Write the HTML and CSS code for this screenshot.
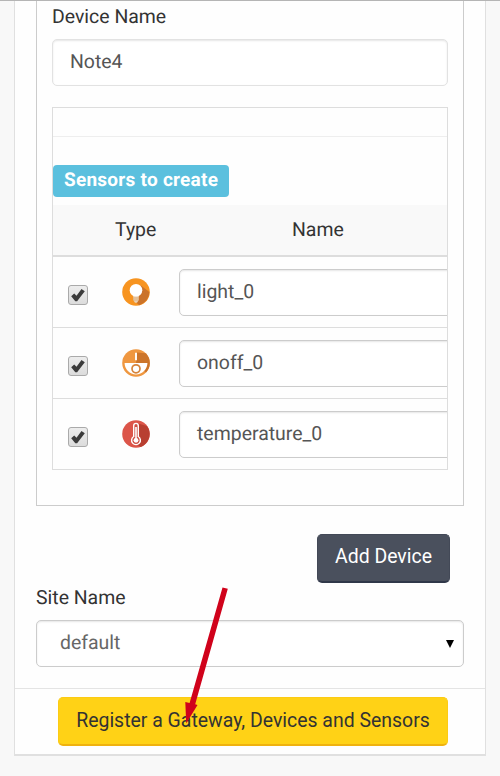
FILE: index.html
```html
<!DOCTYPE html>
<html lang="en">
<head>
<meta charset="utf-8">
<title>Register Gateway</title>
<link rel="stylesheet" href="styles.css">
</head>
<body>
<main class="card">
  <section class="card-body">
    <div class="device">
      <div class="label">Device Name</div>
      <div class="field device-field"><span>Note4</span></div>
      <div class="sensors">
        <div class="spacer"></div>
        <div class="caption"><span class="badge">Sensors to create</span></div>
        <div class="row head"><span></span><span class="type">Type</span><span class="name">Name</span></div>
        <div class="row">
          <span class="check"><svg viewBox="0 0 18 18"><path d="M2.2 10.3 5.2 7.6l2.3 2.2 5-6.9 3.3 2.3-7.7 10H6.3z"/></svg></span>
          <svg class="icon" viewBox="0 0 28 28"><circle cx="14" cy="14" r="13.8" fill="#f79420"/><path d="M18.5 7.2 27.4 14a13.8 13.8 0 0 1-10.2 13.2L11 21.5z" fill="#cb7329"/><path d="M11.2 18h5.6v4L15 24.8h-2L11.2 22z" fill="#ead0b2"/><path d="M11.2 20h5.6M11.3 22h5.4" stroke="#d99b5c" stroke-width=".6"/><circle cx="14" cy="12.2" r="6.3" fill="#fff"/></svg>
          <div class="field sensor-field"><span>light_0</span></div>
        </div>
        <div class="row">
          <span class="check"><svg viewBox="0 0 18 18"><path d="M2.2 10.3 5.2 7.6l2.3 2.2 5-6.9 3.3 2.3-7.7 10H6.3z"/></svg></span>
          <svg class="icon" viewBox="0 0 28 28"><circle cx="14" cy="14" r="13.8" fill="#ef9740"/><path d="M15 3.5 23.8 4.3A13.8 13.8 0 0 1 24 23.6L14 14z" fill="#cc752b"/><path d="M2.6 14h22.8a11.4 11.4 0 0 1-22.8 0z" fill="#fff"/><path d="M14 3.7v7.6" stroke="#fff" stroke-width="1.9"/><circle cx="14" cy="19.8" r="4" fill="#fff" stroke="#d6843b" stroke-width="1.7"/></svg>
          <div class="field sensor-field"><span>onoff_0</span></div>
        </div>
        <div class="row">
          <span class="check"><svg viewBox="0 0 18 18"><path d="M2.2 10.3 5.2 7.6l2.3 2.2 5-6.9 3.3 2.3-7.7 10H6.3z"/></svg></span>
          <svg class="icon" viewBox="0 0 28 28"><circle cx="14" cy="14" r="13.8" fill="#dc5549"/><path d="M16 3.5 25 6a13.8 13.8 0 0 1-6.4 21L14 24z" fill="#b83f31"/><path d="M11.7 16.5V5.7a2.3 2.3 0 0 1 4.6 0v10.8a4.4 4.4 0 1 1-4.6 0z" fill="#cf4e42" stroke="#fff" stroke-width="1.4"/><path d="M14 7v12" stroke="#fff" stroke-width="1.6"/><circle cx="14" cy="20.3" r="2.4" fill="#fff"/></svg>
          <div class="field sensor-field"><span>temperature_0</span></div>
        </div>
      </div>
    </div>
    <div class="actions"><button class="btn add">Add Device</button></div>
    <div class="label site-label">Site Name</div>
    <div class="field select"><span>default</span><svg class="caret" viewBox="0 0 8 8"><path d="M0 0h8L4 8z"/></svg></div>
  </section>
  <footer class="card-footer"><button class="btn register">Register a Gateway, Devices and Sensors</button></footer>
</main>
<svg class="arrow" viewBox="0 0 48 138"><path d="M41.5 1.5 46.8 2.8 14.2 118.2 16.5 119 5.2 137.5 4.3 116 8.6 117z" fill="#d0021b"/></svg>
</body>
</html>
```
FILE: styles.css
```css
* { box-sizing: border-box; }
body {
  margin: 0;
  height: 776px;
  overflow: hidden;
  position: relative;
  background: #f8f8f8;
  border-top: 1px solid #b5b5b5;
  font: 19.45px/24px Roboto, sans-serif;
  letter-spacing: 0;
  text-rendering: geometricPrecision;
  color: #333;
}
.card {
  margin: 0 14px;
  height: 755px;
  background: #fefefe;
  border: solid #e0e0e0;
  border-width: 0 1.5px 2px;
}
.card-body { height: 688px; padding: 0 21px; border-bottom: 1px solid #e4e4e4; }
.device { height: 505px; padding: 4px 15px 0; border: solid #ccc; border-width: 0 1px 1px; }
.label { height: 24px; }
.field {
  height: 47px;
  padding: 10px 17px;
  border: 1px solid #ccc;
  border-radius: 5px;
  background: #fff;
  box-shadow: inset 0 1px 2px rgba(0, 0, 0, 0.1);
  color: #555;
}
.device-field { margin-top: 10px; border-color: #e2e2e2; }
.sensors { margin-top: 21px; height: 363px; border: 1px solid #ddd; overflow: hidden; }
.spacer { height: 29px; border-bottom: 1px solid #eee; }
.caption { height: 68px; padding-top: 28px; }
.badge {
  display: block;
  width: 176px;
  height: 32px;
  padding-left: 11px;
  border-radius: 4px;
  background: #5bc0de;
  color: #fff;
  font-size: 19px;
  font-weight: 700;
  line-height: 29px;
  letter-spacing: 0.25px;
  white-space: nowrap;
}
.row {
  height: 71px;
  display: grid;
  grid-template-columns: 69px 57px 300px;
  align-items: center;
  border-bottom: 1px solid #ddd;
}
.row:last-child { height: 70px; border-bottom: 0; }
.head { height: 52px; background: #f9f9f9; border-bottom: 2px solid #ddd; }
.type { margin-left: -7px; }
.name { padding-left: 113px; }
.check {
  width: 20px;
  height: 20px;
  margin: 6px 0 0 15px;
  border: 1px solid #aaa;
  border-radius: 3px;
  background: linear-gradient(#ededed, #dcdcdc);
}
.check svg { display: block; width: 18px; height: 18px; fill: #3b3b3b; }
.icon { width: 28px; height: 28px; }
.actions { display: flex; justify-content: flex-end; padding: 28px 14px 0 0; }
.btn {
  height: 49px;
  padding: 0 0 3px;
  border: 1px solid;
  border-bottom-width: 2px;
  border-radius: 5px;
  font: inherit;
  letter-spacing: inherit;
  white-space: nowrap;
}
.add { width: 133px; background: #4a505d; border-color: #434957 #434957 #303849; color: #fff; }
.site-label { margin-top: 3px; }
.select { display: flex; justify-content: space-between; align-items: center; margin-top: 10px; padding: 0 9px 2px 23px; color: #666; }
.caret { width: 8px; height: 8px; fill: #000; margin-top: 2px; }
.card-footer { padding: 8px 36px 0 43px; }
.register { width: 390px; padding-bottom: 1px; background: #ffd216; border-color: #fccb14 #fccb14 #efb20e; color: #333; }
.arrow { position: absolute; left: 181px; top: 585px; width: 48px; height: 138px; overflow: visible; }
```
